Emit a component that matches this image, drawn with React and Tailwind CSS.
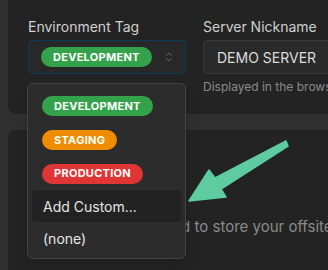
import { ChevronsUpDown } from 'lucide-react';

function Badge({ color, children }) {
  return (
    <span
      className={`inline-flex h-5 items-center rounded-full px-[12px] text-[11px] font-bold uppercase tracking-[0.025em] text-white ${color}`}
    >
      {children}
    </span>
  );
}

export default function App() {
  return (
    <div
      className="relative h-[270px] w-[328px] overflow-hidden bg-[#2f2f2f] pl-2"
      style={{ fontFamily: 'Inter, "Noto Sans", sans-serif' }}
    >
      {/* top settings card */}
      <div className="h-[114px] w-[420px] rounded-b-lg bg-[#232323] px-5 pt-[17px]">
        <div className="flex gap-[17px]">
          <div className="w-[158px] shrink-0">
            <div className="h-5 text-[14px] leading-5 text-[#cfcfcf]">Environment Tag</div>
            <div className="mt-[3px] flex h-[34px] items-center justify-between rounded-[4px] border border-[#0d3a58] bg-[#282828] pl-3 pr-[10px]">
              <Badge color="bg-[#34a24a]">Development</Badge>
              <ChevronsUpDown className="h-[12px] w-[12px] text-[#6f6f6f]" strokeWidth={1.75} />
            </div>
          </div>
          <div className="min-w-0 flex-1">
            <div className="h-5 text-[14px] leading-5 text-[#cfcfcf]">Server Nickname</div>
            <div className="mt-[3px] flex h-[34px] items-center rounded-[4px] border border-[#383838] bg-[#2a2a2a] px-[13px] text-[14px] text-[#dcdcdc]">
              DEMO SERVER
            </div>
            <div className="mt-[5px] whitespace-nowrap text-[12px] leading-4 text-[#8a8a8a]">
              Displayed in the browser tab and page title
            </div>
          </div>
        </div>
      </div>

      {/* second card */}
      <div className="mt-4 h-[200px] w-[420px] rounded-t-lg bg-[#232323] px-5 pt-[87px]">
        <p className="whitespace-nowrap text-[15px] leading-5 text-[#8a8a8a]">Select the bucket used to store your offsite backups.</p>
      </div>

      {/* dropdown menu */}
      <div className="absolute left-[27px] top-[83px] w-[159px] rounded-md border border-[#444] bg-[#2c2c2c] pt-[5px] pb-1 shadow-lg">
        <div className="flex h-[34px] items-center px-[14px]">
          <Badge color="bg-[#34a24a]">Development</Badge>
        </div>
        <div className="flex h-[34px] items-center px-[14px]">
          <Badge color="bg-[#f08c00]">Staging</Badge>
        </div>
        <div className="flex h-[33px] items-center px-[14px]">
          <Badge color="bg-[#e03535]">Production</Badge>
        </div>
        <div className="mx-1 flex h-8 items-center rounded-[4px] bg-[#222222] px-[11px] text-[14px] text-[#e6e6e6]">
          Add Custom...
        </div>
        <div className="mx-1 flex h-8 items-center px-[11px] text-[14px] text-[#e6e6e6]">(none)</div>
      </div>

      {/* annotation arrow */}
      <svg className="pointer-events-none absolute left-0 top-0" width="328" height="270" viewBox="0 0 328 270">
        <polygon
          points="286,141 215,178 209,170 189,201 226,197 221,189 288,146"
          fill="#5ecba1"
          stroke="#5ecba1"
          strokeWidth="1.5"
          strokeLinejoin="round"
        />
      </svg>
    </div>
  );
}
